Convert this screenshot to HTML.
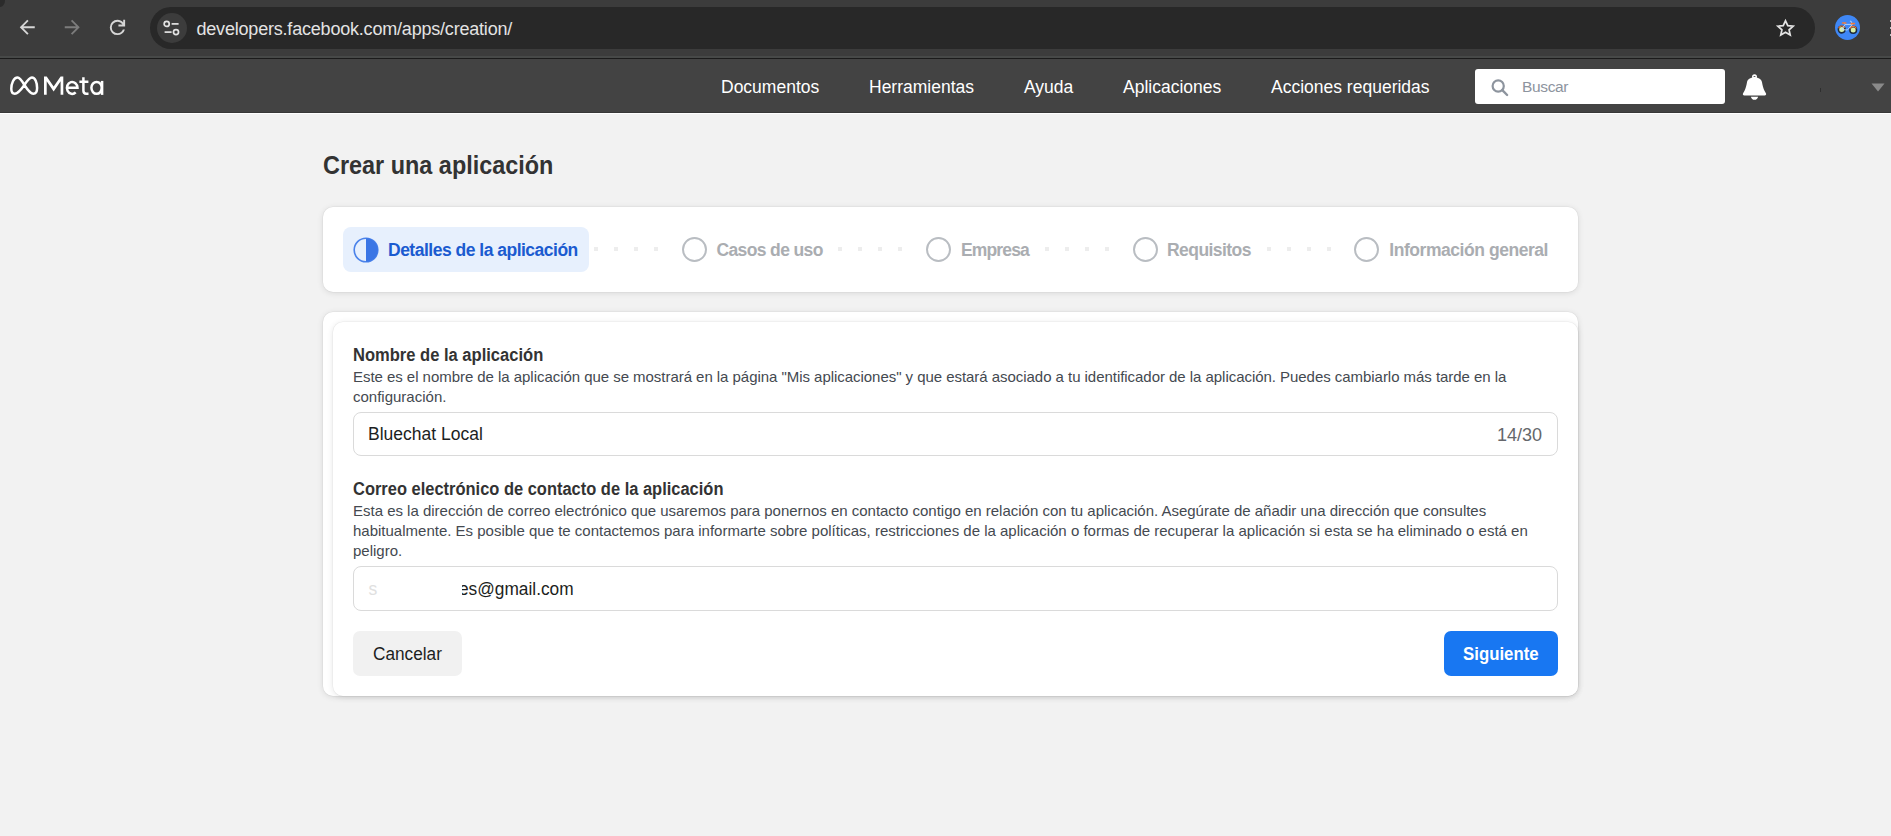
<!DOCTYPE html>
<html><head><meta charset="utf-8">
<style>
*{box-sizing:border-box;margin:0;padding:0}
html,body{width:1891px;height:836px;overflow:hidden;background:#f2f2f2;font-family:"Liberation Sans",sans-serif}
.a{position:absolute}
.t{position:absolute;white-space:nowrap;line-height:1}
#chrome{position:absolute;left:0;top:0;width:1891px;height:59px;background:#3c3c3c}
#chrome .line{position:absolute;left:0;top:56px;width:1891px;height:2px;background:#474948}
#chrome .line2{position:absolute;left:0;top:58px;width:1891px;height:1px;background:#1b1b1b}
#omni{position:absolute;left:150px;top:7px;width:1665px;height:42px;border-radius:21px;background:#282828}
#nav{position:absolute;left:0;top:59px;width:1891px;height:54px;background:#434343;border-bottom:1px solid #383838}
#nav2{position:absolute;left:0;top:113px;width:1891px;height:1px;background:#fff}
.nav{font-size:17.5px;color:#fff;top:79px}
.card{position:absolute;background:#fff;border-radius:10px;box-shadow:0 0 0 0.5px rgba(0,0,0,0.05),0 1px 6px rgba(0,0,0,0.11)}
.step{font-size:17.5px;font-weight:bold;color:#aaadb1;top:241.6px;letter-spacing:-0.45px}
.circ{position:absolute;width:25px;height:25px;border-radius:50%;border:2px solid #b9bdc2;top:237px}
.dot{position:absolute;width:4px;height:4px;background:#ededed;top:247.2px}
.lbl{font-size:17.5px;font-weight:bold;color:#333}
.sx{transform-origin:0 0}
.desc{position:absolute;font-size:15px;line-height:20px;color:#444950;white-space:nowrap}
.inp{position:absolute;left:353px;width:1205px;height:44px;border:1px solid #dadada;border-radius:8px;background:#fff}
</style></head><body>

<div id="chrome">
  <div class="line"></div><div class="line2"></div>
  <div class="a" style="left:0;top:0;width:5px;height:6.5px;background:#2b2b2b;border-bottom-right-radius:5px 6.5px"></div>
  <svg class="a" style="left:16.35px;top:16.15px" width="22.5" height="22.5" viewBox="0 0 24 24"><path fill="#d6d6d6" d="M20 11H7.83l5.59-5.59L12 4l-8 8 8 8 1.41-1.41L7.83 13H20v-2z"/></svg>
  <svg class="a" style="left:61.25px;top:16.15px" width="22.5" height="22.5" viewBox="0 0 24 24"><path fill="#7c7c7c" d="M12 4l-1.41 1.41L16.17 11H4v2h12.17l-5.58 5.59L12 20l8-8z"/></svg>
  <svg class="a" style="left:106.2px;top:16.3px" width="22.95" height="22.95" viewBox="0 -960 960 960"><path fill="#d6d6d6" d="M480-160q-134 0-227-93t-93-227q0-134 93-227t227-93q69 0 132 28.5T720-690v-110h80v280H520v-80h168q-32-56-87.5-88T480-720q-100 0-170 70t-70 170q0 100 70 170t170 70q77 0 139-44t87-116h84q-28 106-114 173t-196 67Z"/></svg>
  <div id="omni">
    <div class="a" style="left:6.5px;top:6px;width:30px;height:30px;border-radius:50%;background:#3c3c3c"></div>
    <svg class="a" style="left:11.5px;top:11px" width="20" height="20" viewBox="0 0 20 20">
      <circle cx="4.7" cy="5.9" r="2.55" fill="none" stroke="#e3e3e3" stroke-width="1.7"/>
      <path d="M9.6 5.9h7" stroke="#e3e3e3" stroke-width="1.7"/>
      <circle cx="14" cy="14.1" r="2.55" fill="none" stroke="#e3e3e3" stroke-width="1.7"/>
      <path d="M2.6 14.1h7" stroke="#e3e3e3" stroke-width="1.7"/>
    </svg>
    <div class="t" style="left:46.5px;top:12.5px;font-size:18px;color:#e3e3e3;letter-spacing:-0.2px">developers.facebook.com/apps/creation/</div>
    <svg class="a" style="left:1625px;top:10.5px" width="21" height="21" viewBox="0 0 24 24"><path fill="none" stroke="#e3e3e3" stroke-width="2" stroke-linejoin="miter" d="M12 3.2l2.6 5.6 6.1.6-4.6 4.1 1.3 6-5.4-3.1-5.4 3.1 1.3-6-4.6-4.1 6.1-.6z"/></svg>
  </div>
  <div class="a" style="left:1835px;top:15px;width:25px;height:25px;border-radius:50%;background:#3f87f5"></div>
  <svg class="a" style="left:1835px;top:15px" width="25" height="25" viewBox="0 0 25 25">
    <circle cx="6.7" cy="14.6" r="3.3" fill="#d9f2a8" stroke="#1e2a3a" stroke-width="1.6"/>
    <circle cx="18.2" cy="14.9" r="3.3" fill="#d9f2a8" stroke="#1e2a3a" stroke-width="1.6"/>
    <path d="M3.6 13.2a3.4 3.4 0 0 1 6.2-.4M15 13.4a3.4 3.4 0 0 1 6.3.1" fill="none" stroke="#f07a3a" stroke-width="1.2"/>
    <path d="M6.7 14.6l3.5-5.2h7.2l-5 5.6zM10.2 9.4l-1-1.6M17.4 9.4l-1.3-3.2h-1.2" fill="none" stroke="#b9d9ff" stroke-width="0.9"/>
    <path d="M7.6 8h3.2M16.2 8.6h3.2" stroke="#f07a3a" stroke-width="1.6" stroke-linecap="round"/>
  </svg>
  <div class="a" style="left:1890px;top:20px;width:1.5px;height:2px;background:#bdbdbd"></div>
  <div class="a" style="left:1890px;top:27px;width:1.5px;height:2px;background:#bdbdbd"></div>
  <div class="a" style="left:1890px;top:34px;width:1.5px;height:2px;background:#bdbdbd"></div>
</div>

<div id="nav"></div><div id="nav2"></div>
<!-- nav content positioned in page coords -->
<svg class="a" style="left:0;top:59px" width="110" height="54" viewBox="0 59 110 54" fill="none" stroke="#fff" stroke-width="2.5">
<path d="M24.4 85C21 79.3 19.5 77.6 17.6 77.6C13.6 77.6 11.3 83.6 11.3 88.8C11.3 92.2 12.8 93.8 14.8 93.8C17.8 93.8 20.5 90.5 24.4 85C28 79.5 29.8 77.6 31.9 77.6C35.2 77.6 37.1 82.6 37.1 88C37.1 91.7 35.6 93.8 33.3 93.8C30.5 93.8 28 90.5 24.4 85Z" stroke-linejoin="round"/>
<path fill="#fff" stroke="none" d="M44 94.8V76.4H46.7L53.65 86.6L60.6 76.4H63.3V94.8H60.6V81.2L53.65 91.4L46.7 81.2V94.8Z"/>
<path d="M67 87.8H77.5A5.3 5.95 0 1 0 75.7 92.4"/>
<path d="M79.4 81.7H88.4M83.4 77.3V90.8c0 2 1.1 2.9 2.8 2.9h2.3"/>
<ellipse cx="96.6" cy="87.85" rx="5.2" ry="5.95"/>
<path d="M102.1 80.9V94.9"/>
</svg>
<div class="t nav" style="left:721px">Documentos</div>
<div class="t nav" style="left:869px">Herramientas</div>
<div class="t nav" style="left:1024px">Ayuda</div>
<div class="t nav" style="left:1123px">Aplicaciones</div>
<div class="t nav" style="left:1271px">Acciones requeridas</div>
<div class="a" style="left:1475px;top:69px;width:250px;height:35px;background:#fff;border-radius:3px"></div>
<svg class="a" style="left:1490px;top:78px" width="20" height="20" viewBox="0 0 20 20"><circle cx="8.2" cy="8" r="5.6" fill="none" stroke="#8d949e" stroke-width="2.2"/><path d="M12.3 12.2l4.8 4.8" stroke="#8d949e" stroke-width="2.4" stroke-linecap="round"/></svg>
<div class="t" style="left:1522px;top:78.7px;font-size:15.5px;color:#8d949e;letter-spacing:-0.35px">Buscar</div>
<svg class="a" style="left:1735px;top:68px" width="40" height="38" viewBox="0 0 40 38"><circle cx="19.5" cy="8.7" r="2.5" fill="#fff"/><ellipse cx="19.5" cy="8.5" rx="1.1" ry="0.5" fill="#555"/><path fill="#fff" d="M19.5 9.5C23.8 9.5 26.6 11.6 27 14.2C27.5 17.2 28.3 20.6 29.6 22.9L30.9 25.2C31.6 26.4 30.9 27.4 29.7 27.4H9.3C8.1 27.4 7.4 26.4 8.1 25.2L9.4 22.9C10.7 20.6 11.5 17.2 12 14.2C12.4 11.6 15.2 9.5 19.5 9.5ZM15.9 28.7H23.1C22.7 30.6 21.3 31.8 19.5 31.8C17.7 31.8 16.3 30.6 15.9 28.7Z"/></svg>
<div class="a" style="left:1820px;top:87.5px;width:1px;height:4px;background:#2e2e2e"></div>
<svg class="a" style="left:1871px;top:83px" width="14" height="9" viewBox="0 0 14 9"><path fill="#8a8a8a" d="M0.5 0.5h13L7 8.5z"/></svg>

<!-- content -->
<div class="t sx" id="title" style="left:322.7px;top:152.6px;transform:scaleX(0.937);font-size:25px;font-weight:bold;color:#333">Crear una aplicación</div>

<div class="card" style="left:322.5px;top:206.7px;width:1255.5px;height:85.3px"></div>
<div class="a" style="left:343px;top:227px;width:246px;height:45px;background:#e7f0fd;border-radius:8px"></div>
<svg class="a" style="left:352.5px;top:236.5px" width="26" height="26" viewBox="0 0 26 26"><circle cx="13" cy="13" r="11.8" fill="none" stroke="#4a82ea" stroke-width="1.6"/><path d="M13 1.2a11.8 11.8 0 0 1 0 23.6z" fill="#3b76e5"/></svg>
<div class="t" style="left:388px;top:241.5px;font-size:17.5px;font-weight:bold;color:#1b5bd0;letter-spacing:-0.5px">Detalles de la aplicación</div>
<div class="dot" style="left:594px"></div><div class="dot" style="left:614px"></div><div class="dot" style="left:634px"></div><div class="dot" style="left:654px"></div>
<div class="circ" style="left:682px"></div>
<div class="t step" style="left:716.5px;letter-spacing:-0.63px">Casos de uso</div>
<div class="dot" style="left:838px"></div><div class="dot" style="left:858px"></div><div class="dot" style="left:878px"></div><div class="dot" style="left:898px"></div>
<div class="circ" style="left:926px"></div>
<div class="t step" style="left:961px;letter-spacing:-0.85px">Empresa</div>
<div class="dot" style="left:1044.5px"></div><div class="dot" style="left:1064.5px"></div><div class="dot" style="left:1085px"></div><div class="dot" style="left:1105px"></div>
<div class="circ" style="left:1133px"></div>
<div class="t step" style="left:1167px;letter-spacing:-0.56px">Requisitos</div>
<div class="dot" style="left:1267px"></div><div class="dot" style="left:1287px"></div><div class="dot" style="left:1307px"></div><div class="dot" style="left:1327px"></div>
<div class="circ" style="left:1354px"></div>
<div class="t step" style="left:1389.3px">Información general</div>

<div class="card" style="left:322.5px;top:311.5px;width:1255.5px;height:384.5px"></div>
<div class="card" style="left:332.6px;top:321.5px;width:1245.4px;height:374.5px"></div>

<div class="t lbl sx" id="l1" style="left:352.7px;top:346.9px;transform:scaleX(0.945)">Nombre de la aplicación</div>
<div class="desc" style="left:353px;top:366.6px"><span style="letter-spacing:-0.041px">Este es el nombre de la aplicación que se mostrará en la página "Mis aplicaciones" y que estará asociado a tu identificador de la aplicación. Puedes cambiarlo más tarde en la</span><br>configuración.</div>
<div class="inp" style="top:412px"></div>
<div class="t" style="left:368px;top:426.2px;font-size:17.5px;color:#1c1e21">Bluechat Local</div>
<div class="t" style="left:1497px;top:425.7px;font-size:18px;color:#65676b">14/30</div>

<div class="t lbl sx" id="l2" style="left:352.5px;top:481.3px;transform:scaleX(0.9406)">Correo electrónico de contacto de la aplicación</div>
<div class="desc" style="left:353px;top:501.1px"><span style="letter-spacing:-0.01px">Esta es la dirección de correo electrónico que usaremos para ponernos en contacto contigo en relación con tu aplicación. Asegúrate de añadir una dirección que consultes</span><br>habitualmente. Es posible que te contactemos para informarte sobre políticas, restricciones de la aplicación o formas de recuperar la aplicación si esta se ha eliminado o está en<br>peligro.</div>
<div class="inp" style="top:566px;height:44.5px"></div>
<div class="t" style="left:368.5px;top:581px;font-size:17.5px;color:#e0e0e0">s</div>
<div class="t sx" id="em" style="left:459.4px;top:581px;transform:scaleX(0.988);font-size:17.5px;color:#1c1e21">es@gmail.com</div>

<div class="a" style="left:440px;top:578px;width:21.8px;height:24px;background:#fff"></div>
<div class="a" style="left:353px;top:631px;width:109px;height:45px;background:#f1f1f1;border-radius:7px"></div>
<div class="t sx" id="can" style="left:373.2px;top:646.3px;transform:scaleX(0.984);font-size:17.5px;color:#1c1e21">Cancelar</div>
<div class="a" style="left:1444px;top:631px;width:114px;height:45px;background:#1877f2;border-radius:7px"></div>
<div class="t sx" id="sig" style="left:1462.5px;top:646.1px;transform:scaleX(0.961);font-size:17.5px;font-weight:bold;color:#fff">Siguiente</div>

</body></html>
